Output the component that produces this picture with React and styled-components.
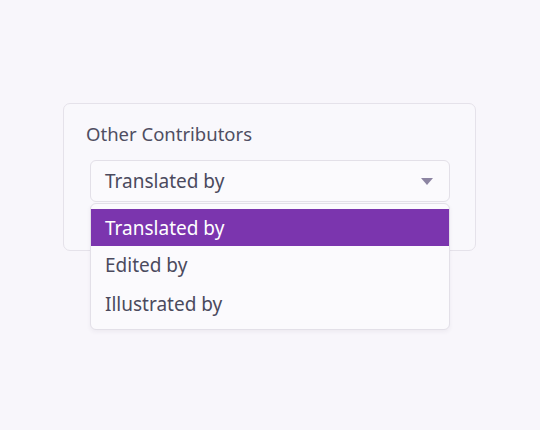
import React, { useState } from "react"
import styled, { createGlobalStyle } from "styled-components"

const GlobalStyle = createGlobalStyle`
	html, body {
		margin: 0;
		background: #f8f6fb;
	}
	body {
		font-family: "Noto Sans", Lato, sans-serif;
		color: #4d4c5f;
	}
`

const Page = styled.div`
	width: 540px;
	height: 430px;
	padding: 103px 0 0 63px;
	box-sizing: border-box;
`

const Card = styled.div`
	width: 413px;
	height: 148px;
	box-sizing: border-box;
	padding: 18px 25px 0 22px;
	background: #f9f8fc;
	border: 1px solid #e5e2ea;
	border-radius: 7px;
`

const Label = styled.div`
	font-size: 18.5px;
	line-height: 24px;
	color: #4f4e62;
`

const SelectWrap = styled.div`
	position: relative;
	margin: 14px 0 0 4px;
`

const SelectBox = styled.div`
	display: flex;
	align-items: center;
	justify-content: space-between;
	height: 42px;
	box-sizing: border-box;
	padding: 0 16px 0 14px;
	background: #fbfafd;
	border: 1px solid #e3e0e8;
	border-radius: 6px;
	font-size: 19px;
	color: #4b4a5e;
`

const Arrow = styled.span`
	width: 0;
	height: 0;
	border-left: 6px solid transparent;
	border-right: 6px solid transparent;
	border-top: 7px solid #8c84a2;
`

const Menu = styled.ul`
	position: absolute;
	top: 43px;
	left: 0;
	right: 0;
	margin: 0;
	padding: 5px 0 6px;
	list-style: none;
	background: #fbfafd;
	border: 1px solid #e3e0e8;
	border-radius: 6px;
	box-shadow: 0 2px 4px rgba(60, 50, 90, 0.06);
`

const Option = styled.li`
	height: ${(props) => (props.active ? "37px" : "38.5px")};
	display: flex;
	align-items: center;
	padding-left: 14px;
	font-size: 19px;
	background: ${(props) => (props.active ? "#7b35ae" : "transparent")};
	color: ${(props) => (props.active ? "#ffffff" : "#4b4a5e")};
`

const options = ["Translated by", "Edited by", "Illustrated by"]

const App = () => {
	const [selected] = useState(0)

	return (
		<>
			<GlobalStyle />
			<Page>
				<Card>
					<Label>Other Contributors</Label>
					<SelectWrap>
						<SelectBox>
							{options[selected]}
							<Arrow />
						</SelectBox>
						<Menu>
							{options.map((o, i) => (
								<Option key={o} active={i === selected}>
									{o}
								</Option>
							))}
						</Menu>
					</SelectWrap>
				</Card>
			</Page>
		</>
	)
}

export default App
